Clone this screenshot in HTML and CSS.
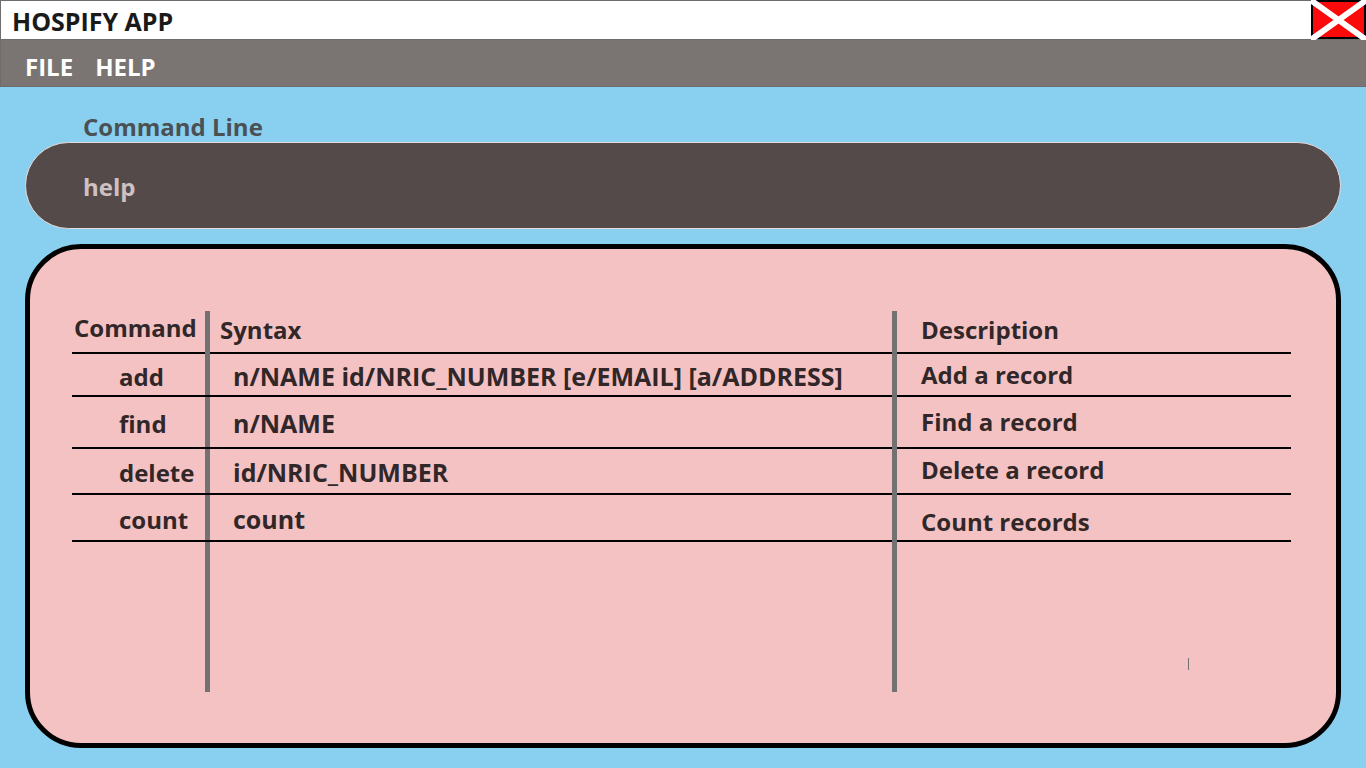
FILE: index.html
```html
<!DOCTYPE html>
<html lang="en">
<head>
<meta charset="utf-8">
<title>HOSPIFY APP</title>
<link rel="stylesheet" href="styles.css">
</head>
<body class="app">
  <header class="titlebar">
    <h1 class="app-title">HOSPIFY APP</h1>
    <button class="close" type="button" aria-label="Close">
      <svg class="close-icon" viewBox="0 0 55 40" aria-hidden="true">
        <rect x="1" y="1" width="53" height="37" fill="#fa0a0a" stroke="#000" stroke-width="2"/>
        <path d="M-2 -1L57 41M-2 41L57 -1" stroke="#fff" stroke-width="6"/>
      </svg>
    </button>
  </header>
  <nav class="menubar">
    <button class="menu-item" type="button">FILE</button>
    <button class="menu-item" type="button">HELP</button>
  </nav>
  <main class="content">
    <label class="command-label" for="command">Command Line</label>
    <input class="command-input" id="command" type="text" value="help" autocomplete="off">
    <section class="panel">
      <table class="commands">
        <colgroup>
          <col class="col-command">
          <col class="col-syntax">
          <col class="col-description">
        </colgroup>
        <thead>
          <tr class="head-row">
            <th class="command" scope="col">Command</th>
            <th class="syntax" scope="col">Syntax</th>
            <th class="description" scope="col">Description</th>
          </tr>
        </thead>
        <tbody>
          <tr class="row-short">
            <td class="command">add</td>
            <td class="syntax">n/NAME id/NRIC_NUMBER [e/EMAIL] [a/ADDRESS]</td>
            <td class="description">Add a record</td>
          </tr>
          <tr class="row-tall">
            <td class="command">find</td>
            <td class="syntax">n/NAME</td>
            <td class="description">Find a record</td>
          </tr>
          <tr class="row-medium">
            <td class="command">delete</td>
            <td class="syntax">id/NRIC_NUMBER</td>
            <td class="description">Delete a record</td>
          </tr>
          <tr class="row-medium row-last">
            <td class="command">count</td>
            <td class="syntax">count</td>
            <td class="description">Count records</td>
          </tr>
          <tr class="row-blank">
            <td></td>
            <td class="bar"></td>
            <td class="bar caret-cell"><span class="caret"></span></td>
          </tr>
        </tbody>
      </table>
    </section>
  </main>
</body>
</html>
```

FILE: styles.css
```css
* {
  box-sizing: border-box;
}

.app {
  display: flex;
  flex-direction: column;
  min-height: 100vh;
  margin: 0;
  background: #89d0f0;
  font: 700 24px/32px "Open Sans", "Noto Sans", sans-serif;
}

.titlebar {
  display: flex;
  justify-content: space-between;
  height: 40px;
  background: #fff;
  border: 1px solid #6f6c6c;
  border-right: 0;
}

.app-title {
  margin: 0;
  padding: 4px 11px 0;
  font: inherit;
  font-size: 25px;
  color: #1a1a1a;
}

.close {
  width: 55px;
  height: 40px;
  margin-top: -1px;
  padding: 0;
  border: 0;
  background: none;
}

.close-icon {
  display: block;
  width: 55px;
  height: 40px;
}

.menubar {
  display: flex;
  gap: 22px;
  height: 47px;
  padding: 7px 24px 0;
  background: #7a7473;
  border: solid #6f6c6c;
  border-width: 0 0 1px 1px;
}

.menu-item {
  padding: 0;
  border: 0;
  background: none;
  font: inherit;
  color: #fff;
}

.content {
  display: flex;
  flex: 1;
  flex-direction: column;
  padding: 24px 25px 20px;
}

.command-label {
  align-self: flex-start;
  padding-left: 58px;
  line-height: 31px;
  color: #4a5054;
}

.command-input {
  height: 87px;
  margin: 0 0 15px;
  padding: 2px 57px 0;
  border: 1px solid #e6dcdc;
  border-radius: 44px;
  background: #544a4a;
  font: inherit;
  color: #cfc1c2;
  outline: 0;
}

.panel {
  flex: 1;
  padding: 62px 45px 50px 42px;
  border: 5px solid #000;
  border-radius: 56px;
  background: #f4c2c3;
}

.commands {
  width: 100%;
  border-spacing: 0;
  table-layout: fixed;
  color: #312728;
}

.commands th,
.commands td {
  padding: 0;
  text-align: left;
  white-space: nowrap;
}

.col-command {
  width: 133px;
}

.col-description {
  width: 399px;
}

.head-row {
  height: 43px;
}

.row-short {
  height: 43px;
}

.row-tall {
  height: 52px;
}

.row-medium {
  height: 46px;
}

.row-last {
  height: 47px;
}

.row-blank {
  height: 150px;
}

.commands .command {
  padding: 2px 0 0 47px;
  background: linear-gradient(#000, #000) bottom / 100% 2px no-repeat;
}

.commands .syntax {
  padding-left: 28px;
  background:
    linear-gradient(#000, #000) bottom / 100% 2px no-repeat,
    linear-gradient(#727272, #727272) left / 5px 100% no-repeat;
}

.commands td.syntax {
  font-size: 25px;
}

.commands .description {
  padding: 0 0 2px 29px;
  background:
    linear-gradient(#727272, #727272) left / 5px 100% no-repeat,
    linear-gradient(#000, #000) bottom / 100% 2px no-repeat;
}

.commands .row-medium .description {
  padding-bottom: 4px;
}

.commands .row-last .description {
  padding: 6px 0 0 29px;
}

.commands .head-row .command {
  padding: 0 0 10px 2px;
}

.commands .head-row .syntax {
  padding: 0 0 6px 15px;
  background:
    linear-gradient(#727272, #727272) left / 5px 100% no-repeat,
    linear-gradient(#000, #000) bottom / 100% 2px no-repeat;
}

.commands .head-row .description {
  padding-bottom: 6px;
}

.bar {
  background: linear-gradient(#727272, #727272) left / 5px 100% no-repeat;
}

.commands .caret-cell {
  padding: 0 102px 22px 0;
  line-height: 12px;
  text-align: right;
  vertical-align: bottom;
}

.caret {
  display: inline-block;
  width: 1px;
  height: 12px;
  background: #727272;
  vertical-align: bottom;
}
```
